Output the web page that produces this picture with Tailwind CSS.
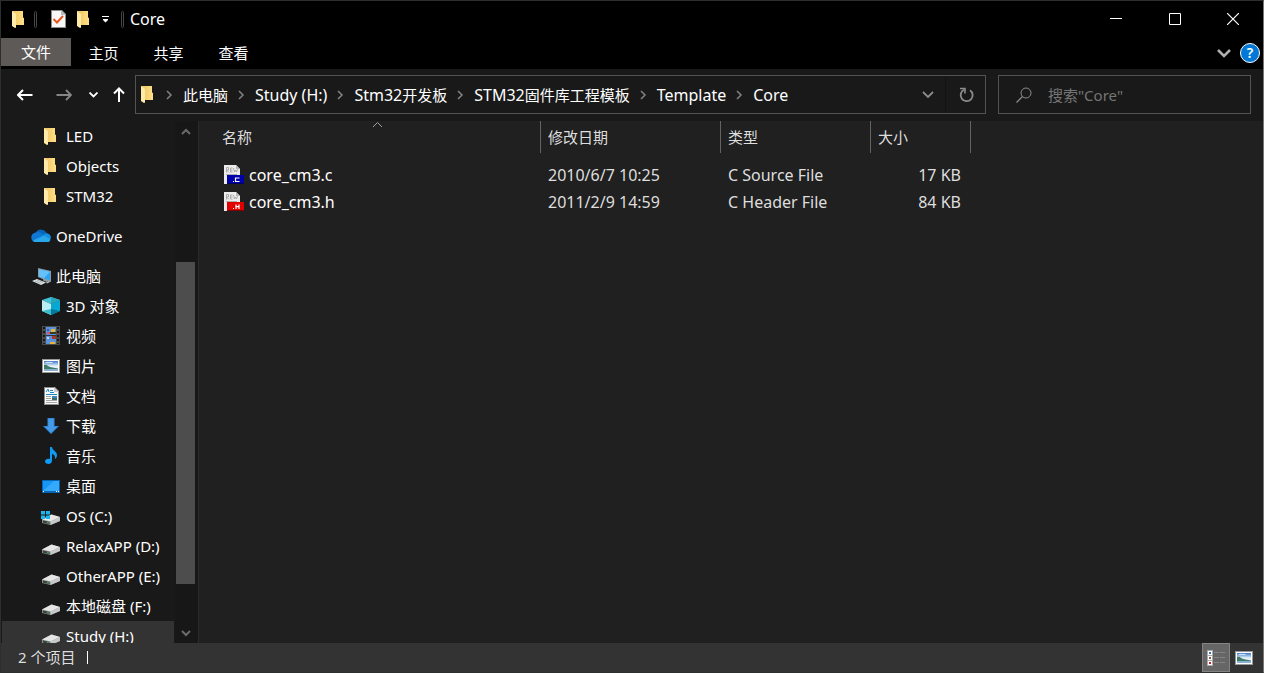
<!DOCTYPE html>
<html lang="zh-CN">
<head>
<meta charset="utf-8">
<meta name="viewport" content="width=device-width, initial-scale=1">
<title>Core</title>
<script src="https://cdn.jsdelivr.net/npm/@tailwindcss/browser@4"></script>
</head>
<body class="bg-black font-['Noto_Sans','Noto_Sans_CJK_SC',sans-serif] text-[15px] leading-5 text-white">

<svg class="absolute size-0" aria-hidden="true">
  <linearGradient id="gold" x1="0" x2="1"><stop offset="0" stop-color="#efc45c"/><stop offset="1" stop-color="#ffe08a"/></linearGradient>
  <linearGradient id="sky" x1="0" x2="0" y1="0" y2="1"><stop offset="0" stop-color="#3c78c8"/><stop offset=".5" stop-color="#e4f2f8"/></linearGradient>
  <symbol id="folder" viewBox="0 0 12 17"><path d="M0 0h11v6.500l1 .5v7H3z" fill="url(#gold)"/><path d="M0 0l4 3v13.500l-1 .5-3-2z" fill="#ffeaa9"/></symbol>
  <symbol id="i-folder" viewBox="0 0 20 20"><use href="#folder" x="3" y="2" width="12" height="17"/></symbol>
  <symbol id="i-cloud" viewBox="0 0 20 20">
    <path d="M5 6a6 5.500 0 0 1 10.500 1L11 11 5 8z" fill="#0864b8"/>
    <path d="M4.500 6.500c2-1 4-.5 5.500.5l4 3-10 6C-1 15-1 7.500 4.500 6.500z" fill="#0f78d4"/>
    <path d="M14 7.500c3-1 6 1.500 6 4.500l-2 3-7-4.500z" fill="#1490df"/>
    <path d="M2 14.500L13 9.500l6.500 4c-.5 2-1.500 2.500-3 2.500H5c-1.500 0-2.500-.5-3-1.500z" fill="#28a8ea"/>
  </symbol>
  <symbol id="i-pc" viewBox="0 0 20 20">
    <path d="M7 2l13 3v11l-3-.5L7 11z" fill="#8e9aa2"/><path d="M8 3.200l11 2.600v8.700L8 10.500z" fill="#2ea3f2"/><path d="M8 3.200l11 2.600-6 6.500-5-1.800z" fill="#63c2fa"/>
    <path d="M12 12.500l4 1.500v2l-4-1.500z" fill="#8e9aa2"/><path d="M1 15l5-2 9 3.500-5 2.500z" fill="#dfe4e6"/><path d="M4 15l6 2.500M6 14l6 2.500" stroke="#8d979c" stroke-width=".7"/><path d="M15 16l3-1 1 1-3 1.500z" fill="#b6bec2"/>
  </symbol>
  <symbol id="i-cube" viewBox="0 0 20 20">
    <path d="M1 4l9-3 9 3-9 4z" fill="#45c3d6"/><path d="M1 4l9 4v11l-9-4z" fill="#b9eef2"/><path d="M10 8l9-4v11l-9 4z" fill="#08a8d2"/>
    <path d="M1 15l9-2v6z" fill="#3bbccd"/><path d="M10 13l9 2-9 4z" fill="#04789b"/><path d="M10 1v7l9-4z" fill="#27a7bb"/>
  </symbol>
  <symbol id="i-video" viewBox="0 0 20 20">
    <path d="M1 0h18v19H1z" fill="#4b4b4b"/><path d="M5 1h10v17H5z" fill="#5b92dc"/><path d="M5 9h10v1H5z" fill="#333"/>
    <path d="M3 1v17M17 1v17" stroke="#1a1a1a" stroke-width="2" stroke-dasharray="2 2"/>
    <path d="M10 3h4v3h-4z" fill="#e8b52c"/><path d="M9 6h6v2H9z" fill="#3b3a1e"/><path d="M6 3h2v2H6z" fill="#315cbc"/><path d="M6 6h3v2H6z" fill="#d94f6d"/><path d="M11 10h4v3h-4z" fill="#a4362b"/><path d="M6 11h2v2H6z" fill="#dfc7de"/><path d="M9 16h5v2H9z" fill="#e8b52c"/>
  </symbol>
  <symbol id="i-image" viewBox="0 0 20 20">
    <path d="M1 3h18v14H1z" fill="#989898"/><path d="M2 4h16v12H2z" fill="#fff"/><path d="M3 5h14v10H3z" fill="url(#sky)"/>
    <path d="M3 9c2-.5 3 0 4 1 3 1.500 6 1.500 10 2.500v.5H3z" fill="#42786a"/><path d="M3 13h14v2H3z" fill="#87b2cf"/><path d="M4 7q2-2 4-1 3-1 4 1z" fill="#e9f2fa" opacity=".8"/>
  </symbol>
  <symbol id="i-doc" viewBox="0 0 20 20">
    <path d="M3 1h11l4 4v14H3z" fill="#8b8b8b"/><path d="M4 2h9l4 4v12H4z" fill="#fafafa"/><path d="M13 1v5h5z" fill="#c9cdd0"/>
    <path d="M5 6l2-3 1 3M9 4.500h3M9 6.500h4M5 8.500h11" stroke="#1c87c9" fill="none"/><path d="M5 10.500h5M5 12.500h5M5 14.500h11M5 16.500h11" stroke="#a5a5a5"/><path d="M11 10h5v4h-5z" fill="#3f87b9"/><path d="M11 12h5v2h-5z" fill="#3c6a68"/>
  </symbol>
  <symbol id="i-down" viewBox="0 0 20 20"><path d="M6.500 2h7v8H18l-8 8-8-8h4.500z" fill="#3189dc"/><path d="M7.500 3h5v8h3L10 16.500 4.500 11h3z" fill="#469be8"/></symbol>
  <symbol id="i-music" viewBox="0 0 20 20"><path d="M9 1h2c0 3 5 4.500 5 8 0 2-1 3.500-2 4 .5-3-1-4.500-3-5v6.500c0 2-1.500 3.500-3.500 3.500C5.500 18 4 17 4 15.500 4 13.500 6.500 12 9 13z" fill="#0d9bf5"/></symbol>
  <symbol id="i-desk" viewBox="0 0 20 20"><path d="M1 4h18v13H1z" fill="#0767b5"/><path d="M2 5h16v10H2z" fill="#1797f5"/><path d="M2 15L13 5h5v10z" fill="#35a9fb"/><path d="M2 15.500h1M15 15.500h1M17 15.500h1" stroke="#fff"/></symbol>
  <symbol id="i-drive" viewBox="0 0 20 20">
    <path d="M1 13.500L10.500 8.500 19 11v4l-9.500 4L1 17z" fill="#8a8a8a"/><path d="M1 13.500L10.500 8.500 19 11l-9.500 4.500z" fill="#e6e6e6"/><path d="M9.500 15.500L19 11v4l-9.500 4z" fill="#c6c8c9"/>
    <path d="M2 14.500l6.500 1.500v2L2 16.700z" fill="#3d403d"/><path d="M6 15.800l2 .4v1.300l-2-.4z" fill="#2bb14c"/>
  </symbol>
  <symbol id="i-os" viewBox="0 0 20 20"><use href="#i-drive" width="20" height="20"/><path d="M0 5h4v3.500H0zM5 5h4v3.500H5zM0 9.500h4V13H0zM5 9.500h4V13H5z" fill="#1cb5f0"/></symbol>
  <symbol id="chev" viewBox="0 0 8 10"><path d="M2 1l4 4-4 4" fill="none" stroke="#838383" stroke-width="1.500"/></symbol>
  <symbol id="page" viewBox="0 0 20 20">
    <path d="M0 0h12l4 4v15H0z" fill="#ececec"/><path d="M12 0v4h4z" fill="#b9b9b9"/>
    <path d="M2.500 7.500v-5h2v2.500h-2l2.500 2.500M8.500 3H6.500v4h2M6.500 5h2M9.500 3l1 4 1-2 1 2 1-3M2 9.500h11" fill="none" stroke="#a5a5a5" stroke-width=".9"/>
  </symbol>
</svg>

<div class="flex h-screen flex-col overflow-hidden border border-[#2d2f2f] border-r-[#777]">

  <header class="bg-black">
    <div class="flex h-[37px] items-center pb-px">
      <svg class="ml-[11px] h-[17px] w-3"><use href="#folder"/></svg>
      <span class="ml-2.5 h-[17px] w-[3px] rounded-xs border border-[#484848]"></span>
      <button aria-label="属性" class="ml-3.5"><svg class="h-[18px] w-[15px]" viewBox="0 0 15 18"><path d="M0 0h11l4 4v14H0z" fill="#8b8b8b"/><path d="M1 1h9l4 4v12H1z" fill="#f8f8f8"/><path d="M10 0v5h5z" fill="#b9bcc0"/><path d="M2.500 9l3.500 3.500L12 6" fill="none" stroke="#e8581c" stroke-width="2"/></svg></button>
      <button aria-label="新建文件夹" class="ml-[11px]"><svg class="h-[17px] w-3"><use href="#folder"/></svg></button>
      <button aria-label="自定义快速访问工具栏" class="ml-[13px]"><svg class="h-2 w-[7px]" viewBox="0 0 7 8"><path d="M0 1.500h7" stroke="#fff"/><path d="M1 4h5v1L3.500 7.500 1 5z" fill="#fff"/></svg></button>
      <span class="ml-3 h-[17px] w-[3px] rounded-xs border border-[#484848]"></span>
      <h1 class="ml-1.5 flex-1 text-[16px]">Core</h1>
      <button aria-label="最小化" class="flex h-full w-[58px] items-center justify-center"><svg class="size-3" viewBox="0 0 12 12"><path d="M0 5.500h12" stroke="#fff"/></svg></button>
      <button aria-label="最大化" class="flex h-full w-[59px] items-center justify-center"><svg class="size-3" viewBox="0 0 12 12"><path d="M.5.5h11v11H.5z" fill="none" stroke="#fff"/></svg></button>
      <button aria-label="关闭" class="mr-px flex h-full w-[58px] items-center justify-center"><svg class="size-3" viewBox="0 0 12 12"><path d="M0 0l12 12M12 0L0 12" stroke="#fff" stroke-width="1.200"/></svg></button>
    </div>
    <div class="flex h-[31px] items-start">
      <button class="h-7 w-[70px] bg-[#5d5a58]">文件</button>
      <button class="h-[30px] w-[65px]">主页</button>
      <button class="h-[30px] w-[65px]">共享</button>
      <button class="h-[30px] w-[65px]">查看</button>
      <button aria-label="展开功能区" class="ml-auto flex h-[30px] items-center"><svg class="h-[9px] w-3.5" viewBox="0 0 14 9"><path d="M1 1l6 6 6-6" fill="none" stroke="#b0b0b0" stroke-width="2.500"/></svg></button>
      <button aria-label="帮助" class="mt-[5px] mr-[3px] ml-[9px] flex size-5 items-center justify-center rounded-full border border-white bg-[#0078d7] text-[14px] font-semibold">?</button>
    </div>
  </header>

  <div class="flex h-[52px] shrink-0 items-center bg-[#191919] pr-3 pb-px">
    <button aria-label="后退" class="ml-4"><svg class="h-3 w-4" viewBox="0 0 16 12"><path d="M15.500 6H1.500M6 1L1 6l5 5" fill="none" stroke="#fff" stroke-width="2"/></svg></button>
    <button aria-label="前进" class="ml-[23px]"><svg class="h-3 w-4" viewBox="0 0 16 12"><path d="M.5 6h14M10 1l5 5-5 5" fill="none" stroke="#868686" stroke-width="1.800"/></svg></button>
    <button aria-label="最近浏览的位置" class="ml-[17px]"><svg class="h-1.5 w-[9px]" viewBox="0 0 9 6"><path d="M.5.5l4 4 4-4" fill="none" stroke="#fff" stroke-width="1.800"/></svg></button>
    <button aria-label="上移" class="ml-[15px]"><svg class="h-[15px] w-3" viewBox="0 0 12 15"><path d="M6 15V1.500M1 6.500l5-5 5 5" fill="none" stroke="#fff" stroke-width="2"/></svg></button>
    <nav aria-label="地址" class="ml-2.5 flex h-[39px] min-w-0 flex-1 items-center border border-[#535353] whitespace-nowrap">
      <svg class="ml-[5px] h-[17px] w-3 shrink-0"><use href="#folder"/></svg>
      <svg class="mr-2.5 ml-3 h-2.5 w-2 shrink-0"><use href="#chev"/></svg><a href="#">此电脑</a>
      <svg class="mr-2.5 ml-[9px] h-2.5 w-2 shrink-0"><use href="#chev"/></svg><a href="#" class="text-[16px]">Study (H:)</a>
      <svg class="mr-2.5 ml-[9px] h-2.5 w-2 shrink-0"><use href="#chev"/></svg><a href="#"><span class="text-[16px]">Stm32</span>开发板</a>
      <svg class="mr-2.5 ml-[9px] h-2.5 w-2 shrink-0"><use href="#chev"/></svg><a href="#"><span class="text-[16px]">STM32</span>固件库工程模板</a>
      <svg class="mr-2.5 ml-[9px] h-2.5 w-2 shrink-0"><use href="#chev"/></svg><a href="#" class="text-[16px]">Template</a>
      <svg class="mr-2.5 ml-[9px] h-2.5 w-2 shrink-0"><use href="#chev"/></svg><a href="#" class="text-[16px]">Core</a>
      <button aria-label="上一个位置" class="ml-auto flex h-full w-9 items-center justify-center border-r border-[#141414]"><svg class="h-2 w-3" viewBox="0 0 12 8"><path d="M1 1l5 5 5-5" fill="none" stroke="#8c8c8c" stroke-width="1.800"/></svg></button>
      <button aria-label="刷新" class="flex h-full w-[39px] items-center justify-center"><svg class="size-4" viewBox="0 0 16 16"><path d="M12 3.200a6 6 0 1 1-6-.4" fill="none" stroke="#8c8c8c" stroke-width="1.800"/><path d="M2 1.500h5v5" fill="none" stroke="#8c8c8c" stroke-width="1.600"/></svg></button>
    </nav>
    <label class="ml-3 flex h-[39px] w-[253px] items-center border border-[#535353] pl-[17px]">
      <svg class="size-4 shrink-0" viewBox="0 0 16 16"><circle cx="10" cy="6" r="5" fill="none" stroke="#8c8c8c"/><path d="M6.500 9.500L.5 15.500" stroke="#8c8c8c" stroke-width="1.200"/></svg>
      <input type="search" aria-label="搜索" placeholder='搜索"Core"' class="ml-4 min-w-0 flex-1 bg-transparent outline-none placeholder:text-[#757575]">
    </label>
  </div>

  <div class="flex min-h-0 flex-1">
    <aside class="flex w-[198px] shrink-0 border-r border-[#2b2b2b] bg-[#191919]">
      <nav aria-label="导航窗格" class="min-w-0 flex-1 overflow-hidden whitespace-nowrap">
        <a href="#" class="flex h-[30px] items-center gap-[5px] pl-10"><svg class="size-5"><use href="#i-folder"/></svg>LED</a>
        <a href="#" class="flex h-[30px] items-center gap-[5px] pl-10"><svg class="size-5"><use href="#i-folder"/></svg>Objects</a>
        <a href="#" class="flex h-[30px] items-center gap-[5px] pl-10"><svg class="size-5"><use href="#i-folder"/></svg>STM32</a>
        <a href="#" class="mt-2.5 flex h-[30px] items-center gap-[5px] pl-[30px]"><svg class="size-5"><use href="#i-cloud"/></svg>OneDrive</a>
        <a href="#" class="mt-2.5 flex h-[30px] items-center gap-[5px] pl-[30px]"><svg class="size-5"><use href="#i-pc"/></svg>此电脑</a>
        <a href="#" class="flex h-[30px] items-center gap-[5px] pl-10"><svg class="size-5"><use href="#i-cube"/></svg>3D 对象</a>
        <a href="#" class="flex h-[30px] items-center gap-[5px] pl-10"><svg class="size-5"><use href="#i-video"/></svg>视频</a>
        <a href="#" class="flex h-[30px] items-center gap-[5px] pl-10"><svg class="size-5"><use href="#i-image"/></svg>图片</a>
        <a href="#" class="flex h-[30px] items-center gap-[5px] pl-10"><svg class="size-5"><use href="#i-doc"/></svg>文档</a>
        <a href="#" class="flex h-[30px] items-center gap-[5px] pl-10"><svg class="size-5"><use href="#i-down"/></svg>下载</a>
        <a href="#" class="flex h-[30px] items-center gap-[5px] pl-10"><svg class="size-5"><use href="#i-music"/></svg>音乐</a>
        <a href="#" class="flex h-[30px] items-center gap-[5px] pl-10"><svg class="size-5"><use href="#i-desk"/></svg>桌面</a>
        <a href="#" class="flex h-[30px] items-center gap-[5px] pl-10"><svg class="size-5"><use href="#i-os"/></svg>OS (C:)</a>
        <a href="#" class="flex h-[30px] items-center gap-[5px] pl-10"><svg class="size-5"><use href="#i-drive"/></svg>RelaxAPP (D:)</a>
        <a href="#" class="flex h-[30px] items-center gap-[5px] pl-10"><svg class="size-5"><use href="#i-drive"/></svg>OtherAPP (E:)</a>
        <a href="#" class="flex h-[30px] items-center gap-[5px] pl-10"><svg class="size-5"><use href="#i-drive"/></svg>本地磁盘 (F:)</a>
        <a href="#" aria-current="true" class="ml-px flex h-[30px] items-center gap-[5px] bg-[#333] pl-[39px]"><svg class="size-5"><use href="#i-drive"/></svg>Study (H:)</a>
      </nav>
      <div class="ml-px flex w-[23px] flex-col bg-[#171717] pr-[3px] pl-px">
        <button aria-label="向上滚动" class="flex h-5 items-center justify-center"><svg class="h-[7px] w-2.5" viewBox="0 0 10 7"><path d="M1 6l4-4 4 4" fill="none" stroke="#6b6b6b" stroke-width="2"/></svg></button>
        <div class="grow-[121]"></div>
        <div class="grow-[322] bg-[#4d4d4d]"></div>
        <div class="grow-[39]"></div>
        <button aria-label="向下滚动" class="flex h-5 items-center justify-center"><svg class="h-[7px] w-2.5" viewBox="0 0 10 7"><path d="M1 1l4 4 4-4" fill="none" stroke="#6b6b6b" stroke-width="2"/></svg></button>
      </div>
    </aside>

    <main class="min-w-0 flex-1 bg-[#202020]">
      <table class="w-[772px] table-fixed border-separate border-spacing-0 text-left text-[#dedede]">
        <colgroup><col class="w-[342px]"><col class="w-[180px]"><col class="w-[150px]"><col class="w-[100px]"></colgroup>
        <thead>
          <tr class="h-8">
            <th class="relative border-r border-[#636363] pl-[23px] font-normal">名称<svg class="absolute top-px left-[174px] h-[5px] w-[9px]" viewBox="0 0 9 5"><path d="M0 5l4.500-4.500L9 5" fill="none" stroke="#a0a0a0"/></svg></th>
            <th class="border-r border-[#636363] pl-[7px] font-normal">修改日期</th>
            <th class="border-r border-[#636363] pl-[7px] font-normal">类型</th>
            <th class="border-r border-[#636363] pl-[7px] font-normal">大小</th>
          </tr>
        </thead>
        <tbody class="text-[16px] before:block before:h-2 before:content-['']">
          <tr class="h-[27px]">
            <td class="pl-[25px]"><a href="#" class="flex items-center gap-[5px] text-white"><svg class="size-5" viewBox="0 0 20 20"><use href="#page" width="20" height="20"/><path d="M3 10h17v9H3z" fill="#0000a8"/><path d="M3 18.500h17" stroke="#000060"/><path d="M15.500 13h-4v3.500h4M9 16.500h1" fill="none" stroke="#fff" stroke-width="1.200"/></svg>core_cm3.c</a></td>
            <td class="pl-[7px]">2010/6/7 10:25</td><td class="pl-[7px]">C Source File</td><td class="pr-2.5 text-right">17 KB</td>
          </tr>
          <tr class="h-[27px]">
            <td class="pl-[25px]"><a href="#" class="flex items-center gap-[5px] text-white"><svg class="size-5" viewBox="0 0 20 20"><use href="#page" width="20" height="20"/><path d="M3 10h17v9H3z" fill="#e00000"/><path d="M3 18.500h17" stroke="#800000"/><path d="M12 12.500v4.500M15 12.500v4.500M12 14.700h3M9 16.500h1" fill="none" stroke="#fff" stroke-width="1.200"/></svg>core_cm3.h</a></td>
            <td class="pl-[7px]">2011/2/9 14:59</td><td class="pl-[7px]">C Header File</td><td class="pr-2.5 text-right">84 KB</td>
          </tr>
        </tbody>
      </table>
    </main>
  </div>

  <footer class="flex h-[29px] shrink-0 items-center bg-[#333] text-[#dedede]">
    <span class="pb-0.5 pl-[17px]">2 个项目</span>
    <span class="ml-3 h-[13px] w-px bg-white"></span>
    <button aria-label="详细信息" aria-pressed="true" class="ml-auto flex h-[29px] w-7 items-center justify-center border border-[#838383] bg-[#666]">
      <svg class="h-4 w-[18px]" viewBox="0 0 18 16"><path d="M0 0h6v16H0z" fill="#aaa"/><path d="M1 1h4v4H1zM1 6h4v4H1zM1 11h4v4H1z" fill="#fff"/><path d="M2 2h2v2H2z" fill="#3372ad"/><path d="M2 7h2v2H2z" fill="#8b5940"/><path d="M2 12h2v2H2z" fill="#d02020"/><path d="M7 2.500h5M13 2.500h5M7 7.500h5M13 7.500h5M7 12.500h5M13 12.500h5" stroke="#858585"/></svg>
    </button>
    <button aria-label="大图标" class="mr-[9px] ml-1"><svg class="size-5"><use href="#i-image"/></svg></button>
  </footer>
</div>
</body>
</html>
